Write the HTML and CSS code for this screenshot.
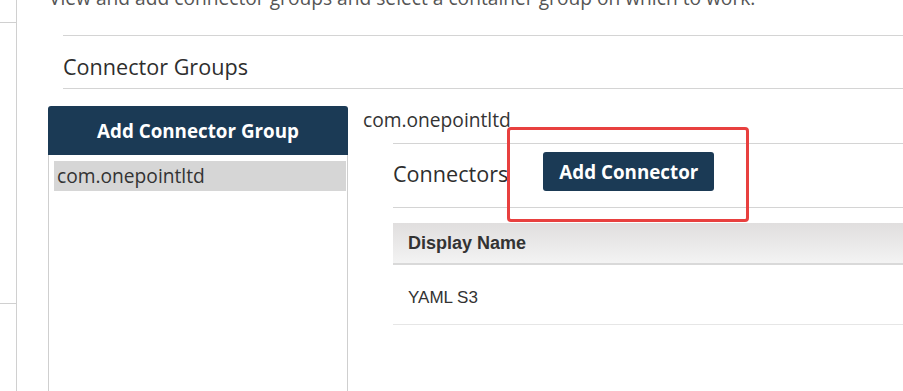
FILE: index.html
```html
<!DOCTYPE html>
<html lang="en">
<head>
    <meta charset="UTF-8">
    <meta name="viewport" content="width=device-width, initial-scale=1.0">
    <title>Connector Groups</title>
    <link rel="stylesheet" href="styles.css">
</head>
<body>
    <div class="layout">
        <aside class="sidebar">
            <div class="nav-item"></div>
            <div class="nav-item nav-item-tall"></div>
        </aside>

        <main class="content">
            <p class="intro">View and add connector groups and select a container group on which to work.</p>

            <section class="groups">
                <h2 class="section-title">Connector Groups</h2>

                <div class="groups-body">
                    <div class="group-list-col">
                        <button class="btn btn-block">Add Connector Group</button>
                        <ul class="group-list">
                            <li class="selected">com.onepointltd</li>
                        </ul>
                    </div>

                    <div class="group-detail">
                        <div class="group-name">com.onepointltd</div>

                        <div class="connectors">
                            <div class="connectors-head">
                                <h3>Connectors</h3>
                                <button class="btn">Add Connector</button>
                                <span class="highlight"></span>
                            </div>

                            <table class="connector-table">
                                <thead>
                                    <tr><th>Display Name</th></tr>
                                </thead>
                                <tbody>
                                    <tr><td>YAML S3</td></tr>
                                </tbody>
                            </table>
                        </div>
                    </div>
                </div>
            </section>
        </main>
    </div>
</body>
</html>
```

FILE: styles.css
```css
body {
    margin: 0;
    font-family: "Open Sans", Arial, sans-serif;
    color: #333;
    background: #fff;
    overflow: hidden;
}
.layout {
    display: flex;
    height: 391px;
    overflow: hidden;
}
.sidebar {
    width: 16px;
    flex-shrink: 0;
    border-right: 1px solid #d0d0d0;
}
.nav-item {
    height: 22px;
    border-bottom: 1px solid #d0d0d0;
}
.nav-item-tall {
    height: 280px;
}
.content {
    flex: 1;
    min-width: 0;
    padding-left: 31px;
}
.intro {
    margin: -15px 0 24px 1px;
    font-size: 19.2px;
    line-height: 26px;
    color: #555;
    white-space: nowrap;
}
.section-title {
    margin: 0 0 0 15px;
    padding: 15px 0 5px;
    font-size: 21.6px;
    line-height: 32px;
    font-weight: 400;
    color: #2e2e2e;
    border-top: 1px solid #d4d4d4;
    border-bottom: 1px solid #d4d4d4;
}
.groups-body {
    display: flex;
    gap: 15px;
    margin-top: 17px;
}
.group-list-col {
    width: 300px;
    flex-shrink: 0;
}
.btn {
    font-family: "Open Sans", Arial, sans-serif;
    font-size: 18.8px;
    font-weight: 700;
    color: #fff;
    background-color: #1b3a55;
    border: none;
    border-radius: 3px;
    height: 39px;
    padding: 0 16px;
    cursor: pointer;
}
.btn-block {
    display: block;
    width: 100%;
    height: 49px;
    border-radius: 3px 3px 0 0;
}
.group-list {
    list-style: none;
    margin: 0;
    padding: 6px 1px 0 5px;
    height: 300px;
    border: 1px solid #cfcfcf;
    border-top: none;
}
.group-list li {
    height: 30px;
    line-height: 30px;
    padding-left: 3px;
    font-size: 19.2px;
    color: #333;
}
.group-list li.selected {
    background-color: #d6d6d6;
}
.group-detail {
    flex: 1;
    min-width: 0;
}
.group-name {
    font-size: 19.2px;
    line-height: 28px;
    color: #333;
}
.connectors {
    margin: 9px 0 0 30px;
}
.connectors-head {
    position: relative;
    display: flex;
    align-items: flex-start;
    padding: 8px 0 16px;
    border-top: 1px solid #d4d4d4;
    border-bottom: 1px solid #d4d4d4;
}
.connectors-head h3 {
    margin: 6px 35px 0 0;
    font-size: 21.6px;
    line-height: 32px;
    font-weight: 400;
    color: #2e2e2e;
}
.highlight {
    position: absolute;
    left: 114px;
    top: -17px;
    width: 236px;
    height: 89px;
    border: 3px solid #e8403f;
    border-radius: 4px;
}
.connector-table {
    width: 100%;
    margin-top: 15px;
    border-collapse: collapse;
    font-family: "Liberation Sans", Arial, sans-serif;
    color: #333;
}
.connector-table th {
    height: 40px;
    padding: 0 0 0 15px;
    text-align: left;
    font-size: 18px;
    font-weight: 700;
    background: linear-gradient(#e0dede, #f3f3f3);
    border-bottom: 2px solid #d9d9d9;
}
.connector-table td {
    height: 53px;
    padding: 6px 0 0 15px;
    font-size: 17px;
    border-bottom: 1px solid #e6e6e6;
}
```
